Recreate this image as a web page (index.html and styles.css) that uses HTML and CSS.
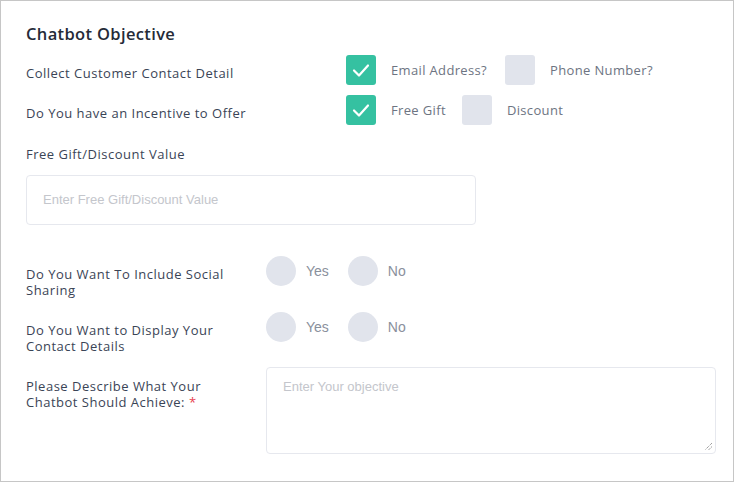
FILE: index.html
```html
<!DOCTYPE html>
<html>
<head>
<meta charset="utf-8">
<link rel="stylesheet" href="styles.css">
</head>
<body>
<div class="frame">
  <h2 class="title">Chatbot Objective</h2>

  <div class="row row-check first">
    <div class="label wide">Collect Customer Contact Detail</div>
    <div class="options">
      <span class="box checked"><svg viewBox="0 0 30 30" width="30" height="30"><path d="M8 15.5 L13 20.5 L22 10.5" fill="none" stroke="#fff" stroke-width="2.2" stroke-linecap="round" stroke-linejoin="round"/></svg></span>
      <span class="opt opt-email">Email Address?</span>
      <span class="box"></span>
      <span class="opt">Phone Number?</span>
    </div>
  </div>

  <div class="row row-check second">
    <div class="label wide">Do You have an Incentive to Offer</div>
    <div class="options">
      <span class="box checked"><svg viewBox="0 0 30 30" width="30" height="30"><path d="M8 15.5 L13 20.5 L22 10.5" fill="none" stroke="#fff" stroke-width="2.2" stroke-linecap="round" stroke-linejoin="round"/></svg></span>
      <span class="opt opt-gift">Free Gift</span>
      <span class="box"></span>
      <span class="opt">Discount</span>
    </div>
  </div>

  <div class="label value-label">Free Gift/Discount Value</div>
  <div class="input">Enter Free Gift/Discount Value</div>

  <div class="row row-radio radio1">
    <div class="label narrow">Do You Want To Include Social Sharing</div>
    <div class="options">
      <span class="circle"></span><span class="yn yes">Yes</span>
      <span class="circle"></span><span class="yn">No</span>
    </div>
  </div>

  <div class="row row-radio radio2">
    <div class="label narrow">Do You Want to Display Your Contact Details</div>
    <div class="options">
      <span class="circle"></span><span class="yn yes">Yes</span>
      <span class="circle"></span><span class="yn">No</span>
    </div>
  </div>

  <div class="row row-text">
    <div class="label narrow">Please Describe What Your Chatbot Should Achieve:&nbsp;<span class="req">*</span></div>
    <div class="textarea">
      <span class="ph">Enter Your objective</span>
      <svg class="grip" width="9" height="9" viewBox="0 0 9 9"><path d="M8 1 L1 8 M8 4.5 L4.5 8" stroke="#777" stroke-width="1" fill="none" stroke-dasharray="1 1"/></svg>
    </div>
  </div>
</div>
</body>
</html>
```
FILE: styles.css
```css
html, body {
  margin: 0;
  padding: 0;
  background: #fff;
}
.frame {
  box-sizing: border-box;
  width: 734px;
  height: 482px;
  border: 1px solid #c6c6c6;
  padding: 0 0 0 25px;
  font-family: "Open Sans", sans-serif;
  color: #3b4556;
}
.title {
  margin: 0;
  padding-top: 23px;
  font-size: 16.5px;
  line-height: 20px;
  font-weight: 600;
  letter-spacing: 0.35px;
  color: #252b38;
}
.row {
  display: flex;
  align-items: flex-start;
}
.label {
  font-size: 13px;
  line-height: 16px;
  letter-spacing: 0.5px;
  color: #3a4456;
}
.wide {
  width: 320px;
  padding-top: 10px;
}
.narrow {
  width: 210px;
  margin-right: 30px;
}
.first { margin-top: 11px; }
.second { margin-top: 10px; }
.options {
  display: flex;
  align-items: center;
  height: 30px;
}
.box {
  width: 30px;
  height: 30px;
  border-radius: 3px;
  background: #e1e4ec;
  display: block;
}
.box svg { display: block; }
.box.checked { background: #35c1a1; }
.opt {
  font-size: 13px;
  letter-spacing: 0.35px;
  color: #6d7482;
  margin-left: 15px;
  margin-right: 15px;
}
.opt-email { margin-right: 18px; }
.opt-gift { margin-right: 16px; }
.value-label {
  margin-top: 21px;
}
.input {
  box-sizing: border-box;
  margin-top: 13px;
  width: 450px;
  height: 50px;
  border: 1px solid #e6e8ee;
  border-radius: 4px;
  padding-left: 16px;
  font-family: "Liberation Sans", Arial, sans-serif;
  font-size: 13px;
  line-height: 48px;
  color: #c4c6cc;
}
.radio1 { margin-top: 31px; }
.radio2 { margin-top: 14px; }
.row-radio .label { padding-top: 10px; }
.circle {
  width: 30px;
  height: 30px;
  border-radius: 50%;
  background: #e1e4ec;
  display: block;
}
.yn {
  font-family: "Liberation Sans", Arial, sans-serif;
  font-size: 14px;
  color: #8a909c;
  margin-left: 10px;
}
.yes { margin-right: 19px; }
.row-text { margin-top: 13px; }
.row-text .label { padding-top: 11px; }
.req { color: #e8414f; }
.textarea {
  position: relative;
  box-sizing: border-box;
  width: 450px;
  height: 87px;
  border: 1px solid #e6e8ee;
  border-radius: 4px;
  padding: 6px 16px;
}
.ph {
  font-family: "Liberation Sans", Arial, sans-serif;
  font-size: 13px;
  color: #c4c6cc;
  display: inline-block;
}
.grip {
  position: absolute;
  right: 2px;
  bottom: 2px;
}
```
